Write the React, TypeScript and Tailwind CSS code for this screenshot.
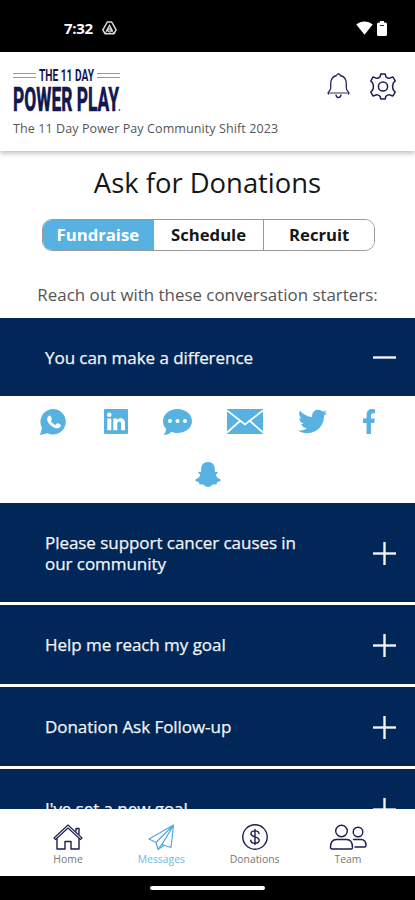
import { useState, type ReactNode } from 'react';
import clsx from 'clsx';
import { FaFacebookF, FaTwitter } from 'react-icons/fa';

function StatusBar() {
  return (
    <div className="flex h-[52px] shrink-0 items-center bg-black pt-1 pr-[28px] pl-[64px] text-white">
      <span className="w-[29px] text-[15px] leading-5 font-bold tracking-[-0.3px]">7:32</span>
      <svg className="ml-[9px]" width="15" height="14" viewBox="0 0 15 14" fill="none" stroke="#ddd">
        <path d="M5.300 1h4.400l4.400 7.800-2.200 4H3.100l-2.200-4z" strokeWidth="1.500" strokeLinejoin="round" />
        <path d="M7.500 4.200 10 8.800H5z" strokeWidth="1.200" />
        <path d="M3.400 12.200 5 8.800m6.600 3.400L10 8.800" />
        <circle cx="7.500" cy="9" r="2" strokeWidth="1.200" />
      </svg>
      <svg className="ml-auto" width="17" height="14" viewBox="0 0 17 14" fill="#fff">
        <path d="M.3 3.500C5-.4 12-.4 16.700 3.500L8.500 13.700z" />
      </svg>
      <svg className="ml-[4px]" width="10" height="15" viewBox="0 0 10 15">
        <path fill="#fff" d="M3 0h4v1.500h1.500Q10 1.500 10 3v10.500Q10 15 8.500 15h-7Q0 15 0 13.500V3Q0 1.500 1.500 1.500H3z" />
        <path stroke="#333" d="M3 4.500h4" />
      </svg>
    </div>
  );
}

function Logo() {
  return (
    <svg className="overflow-visible" width="108" height="45" viewBox="0 0 108 45" fill="#12194f" fontFamily="Roboto, sans-serif">
      <path d="M0 5.500h23M0 9.500h23M84 5.500h23M84 9.500h23" stroke="#9299ad" />
      <g transform="translate(26 13) scale(1 1.400)">
        <text fontSize="12" fontWeight="700" textLength="55" lengthAdjust="spacingAndGlyphs">
          THE 11 DAY
        </text>
      </g>
      <g transform="translate(0 42.500) scale(1 1.900)">
        <text fontSize="17.500" fontWeight="800" stroke="#12194f" strokeWidth="0.200" textLength="106" lengthAdjust="spacingAndGlyphs">
          POWER PLAY
        </text>
      </g>
      <circle cx="106.500" cy="42" r="0.800" />
    </svg>
  );
}

function BellIcon() {
  return (
    <svg width="23" height="26" viewBox="0 0 23 26" fill="none" stroke="#242653" strokeWidth="1.300" strokeLinejoin="round">
      <path d="M9.700 2.500Q9.700 1 11.500 1t1.800 1.500c4.200 1 6 4.200 6 8v4.500c0 2 1 3 2.200 4.200.8.900.4 1.800-.7 1.800" />
      <path d="M9.700 2.500c-4.200 1-6 4.200-6 8v4.500c0 2-1 3-2.200 4.200-.8.900-.4 1.800.7 1.800" />
      <path d="M2.200 20h18.600" stroke="#8d8d9c" strokeWidth="1.800" />
      <path d="M9 21.500c0 4 5 4 5 0" />
    </svg>
  );
}

function GearIcon() {
  return (
    <svg width="26" height="27" viewBox="0 0 26 27" fill="none" stroke="#1c1f4f" strokeWidth="1.500" strokeLinejoin="round">
      <path d="M10.800 1h4.400l.7 2.700q2.800 2.800 5.300.8l1.800-.4 2.200 3.800-1.700 1.800q-1.800 3.800 0 7.600l1.700 1.800-2.200 3.800-1.800-.4q-2.500-2-5.300.8L15.200 26h-4.400l-.7-2.700q-2.800-2.800-5.300-.8l-1.800.4-2.200-3.800 1.700-1.800q1.800-3.800 0-7.600L.8 7.900 3 4.100l1.800.4q2.500 2 5.300-.8z" />
      <circle cx="13" cy="13.500" r="4.600" />
    </svg>
  );
}

function Header() {
  return (
    <header className="z-10 flex h-[99px] shrink-0 justify-between bg-white pt-4 pr-[19px] pl-[13px] shadow-[0_2px_5px_rgba(0,0,0,0.28)]">
      <div>
        <Logo />
        <p className="mt-[6px] text-[12.5px] leading-[19px] tracking-[0.1px] whitespace-nowrap text-[#555]">
          The 11 Day Power Pay Community Shift 2023
        </p>
      </div>
      <div className="flex gap-5 pt-[5px]">
        <BellIcon />
        <GearIcon />
      </div>
    </header>
  );
}

const tabs = ['Fundraise', 'Schedule', 'Recruit'];

function Tabs() {
  const [active, setActive] = useState('Fundraise');

  return (
    <div className="mt-[20px] mr-[40px] ml-[42px] flex h-8 overflow-hidden rounded-[10px] border border-[#999]">
      {tabs.map((tab) => (
        <button
          key={tab}
          onClick={() => setActive(tab)}
          className={clsx(
            'flex-1 border-r border-[#999] text-[16.7px] leading-5 font-bold last:border-r-0',
            active === tab ? 'bg-[#57b1e1] text-white' : 'bg-white text-[#161616]',
          )}
        >
          {tab}
        </button>
      ))}
    </div>
  );
}

function WhatsappIcon() {
  return (
    <svg width="29" height="26" viewBox="0 0 29 26" fill="currentColor">
      <path d="M0 26 2 19A12.700 12.700 0 1 1 7.500 24.200z" />
      <path
        fill="#fff"
        d="M8.400 7.200c1-1 2-.9 2.500.2l.9 2.300c.3.700-.1 1.100-1 2 1.100 2 2.600 3.400 4.700 4.300l1.300-1.500c.4-.5.800-.4 1.300-.2l2.300 1.200c.7.400.5 1.700-.2 2.500-1.500 1.700-3.700 1.600-6.300.4-3.200-1.500-5-3.700-6.200-6-.9-1.900-.7-3.900.7-5.200z"
      />
    </svg>
  );
}

function LinkedinIcon() {
  return (
    <svg width="24" height="25" viewBox="0 0 24 25" fill="currentColor">
      <rect width="24" height="25" rx="1" />
      <g fill="#fff">
        <circle cx="5.300" cy="5.700" r="2.300" />
        <path d="M3.300 9.500h4v11.700h-4zM9.300 9.500h3.900v1.600c2-3 7.800-2.500 7.800 3v7.100h-4v-6.400c0-3.300-3.700-3.100-3.700 0v6.400h-4z" />
      </g>
    </svg>
  );
}

function ChatIcon() {
  return (
    <svg width="29" height="26" viewBox="0 0 29 26" fill="currentColor">
      <path d="M14.500 0C22.500 0 29 5.200 29 12s-6.500 12-14.500 12c-2.300 0-4.200-.4-6-1.200C6.500 25 3.800 26 .5 26c1.600-1.700 2.500-3.500 2.600-6C1.200 18 0 15.200 0 12 0 5.200 6.500 0 14.500 0z" />
      <g fill="#fff">
        <circle cx="7" cy="12" r="2" />
        <circle cx="14.500" cy="12" r="2" />
        <circle cx="22" cy="12" r="2" />
      </g>
    </svg>
  );
}

function MailIcon() {
  return (
    <svg width="36" height="25" viewBox="0 0 36 25">
      <rect width="36" height="25" fill="currentColor" />
      <path d="m0 1.500 18 14 18-14M0 23.500l13-11.500M36 23.500 23 12" fill="none" stroke="#fff" strokeWidth="1.700" />
    </svg>
  );
}

function SnapchatIcon() {
  return (
    <svg width="26" height="25" viewBox="0 0 27 25" preserveAspectRatio="none" fill="currentColor">
      <path d="M13.500 0c4.400 0 7.100 2.800 7.100 7v3l2.600-.3c.8.200.6 1.200-.2 1.700l-1.600 1.300c.8 2.200 2.300 3.700 5 4.700.8.300.5 1.300-.3 1.600l-3.100 1.200-.8 2.200-3.800.2c-1.500 1.600-3 2.400-4.900 2.400s-3.400-.8-4.900-2.400l-3.800-.2L4 20.200.9 19c-.8-.3-1.100-1.300-.3-1.600 2.700-1 4.200-2.500 5-4.700L4 11.400c-.8-.5-1-1.500-.2-1.700l2.600.3V7c0-4.200 2.700-7 7.100-7z" />
    </svg>
  );
}

function ShareLinks() {
  return (
    <div className="h-[107px] bg-white pt-[11px] text-[#57b1e1]">
      <div className="flex items-center justify-between pr-[39px] pl-10">
        <WhatsappIcon />
        <LinkedinIcon />
        <ChatIcon />
        <MailIcon />
        <FaTwitter className="h-[29px] w-[29px]" />
        <FaFacebookF className="h-[25px] w-[14px]" preserveAspectRatio="none" />
      </div>
      <div className="mt-[26px] flex justify-center">
        <SnapchatIcon />
      </div>
    </div>
  );
}

function Toggle({ open }: { open: boolean }) {
  return (
    <svg className={clsx('shrink-0', !open && 'mt-[2px]')} width="23" height="23" viewBox="0 0 23 23" stroke="#f3f3f7" strokeWidth="2.400">
      <path d="M0 11.500h23" />
      {!open && <path d="M11.500 0v23" />}
    </svg>
  );
}

const starters = [
  { title: 'You can make a difference', height: 'h-[78px]' },
  { title: 'Please support cancer causes in our community', height: 'h-[99px]' },
  { title: 'Help me reach my goal', height: 'h-[79px]' },
  { title: 'Donation Ask Follow-up', height: 'h-[79px]' },
  { title: "I've set a new goal", height: 'h-[78px]' },
];

function Starters() {
  const [openIndex, setOpenIndex] = useState(0);

  return (
    <div className="mt-[11px]">
      {starters.map(({ title, height }, i) => (
        <div key={title} className={clsx(openIndex !== i && 'mb-[3px]')}>
          <button
            onClick={() => setOpenIndex(openIndex === i ? -1 : i)}
            className={clsx('flex w-full items-center justify-between bg-[#002757] pr-[19px] pl-[45px] text-left', height)}
          >
            <span className="w-[270px] text-[17px] leading-[21px] tracking-[-0.05px] text-[#f3f3f7] [-webkit-text-stroke:0.25px_#f3f3f7]">
              {title}
            </span>
            <Toggle open={openIndex === i} />
          </button>
          {openIndex === i && <ShareLinks />}
        </div>
      ))}
    </div>
  );
}

function NavItem({ label, active, children }: { label: string; active?: boolean; children: ReactNode }) {
  return (
    <a className={clsx('flex w-[93.3px] flex-col items-center', active ? 'text-[#4fa9df]' : 'text-[#1b1e50]')}>
      <svg width="38" height="27" viewBox="0 0 38 27" fill="none" stroke="currentColor" strokeWidth="1.400" strokeLinejoin="round" strokeLinecap="round">
        {children}
      </svg>
      <span className={clsx('mt-px text-[10.4px] leading-[14px]', active ? 'text-[#6bb9e6]' : 'text-[#777]')}>{label}</span>
    </a>
  );
}

function BottomNav() {
  return (
    <nav className="flex h-[67px] shrink-0 justify-center bg-white pt-[15px] pl-px">
      <NavItem label="Home">
        <path d="M5 14 19 1l14 13-1.500 1.500L19 4 6.500 15.500z" strokeWidth="1.100" />
        <path d="M8 14.500V25h8v-7.500h6V25h8V14.500M27 7V4.500h3V10" />
      </NavItem>
      <NavItem label="Messages" active>
        <path d="M31.500 1 7 15l7 3.500L31.500 1 29 23.500l-9-3zM14 18.500l2 7 3.500-5M16 25.500l6-4.200M20 20.500l9-15" strokeWidth="1.200" />
      </NavItem>
      <NavItem label="Donations">
        <circle cx="19" cy="13" r="12.200" />
        <path d="M23 9.500C22.500 6 15 6 15 9.700c0 4 8.200 2.300 8.200 6.600 0 3.900-8 4-8.500 0M19 5.500v15" strokeWidth="1.400" />
      </NavItem>
      <NavItem label="Team">
        <circle cx="12.500" cy="7" r="5.800" />
        <path d="M1.500 23.500c0-5 2-8 6-8h10c4 0 6 3 6 8 0 1-.5 1.500-1.500 1.500H3c-1 0-1.500-.5-1.500-1.500z" />
        <circle cx="29" cy="8" r="4.800" />
        <path d="M24.500 15.500h7.500c3.500 0 5 2.500 5 6 0 1-.5 1.500-1.500 1.500h-9.500" />
      </NavItem>
    </nav>
  );
}

export default function App() {
  return (
    <div className="flex h-[900px] w-[415px] flex-col overflow-hidden bg-white font-['Open_Sans',sans-serif]">
      <StatusBar />
      <Header />
      <main className="min-h-0 flex-1 overflow-hidden">
        <h1 className="mt-4 text-center text-[27.4px] leading-8 text-[#161616]">Ask for Donations</h1>
        <Tabs />
        <p className="mt-[32px] text-center text-[16.9px] leading-6 whitespace-nowrap text-[#555]">
          Reach out with these conversation starters:
        </p>
        <Starters />
      </main>
      <BottomNav />
      <div className="flex h-6 shrink-0 items-center justify-center bg-black">
        <div className="h-1 w-[115px] rounded-full bg-white" />
      </div>
    </div>
  );
}
